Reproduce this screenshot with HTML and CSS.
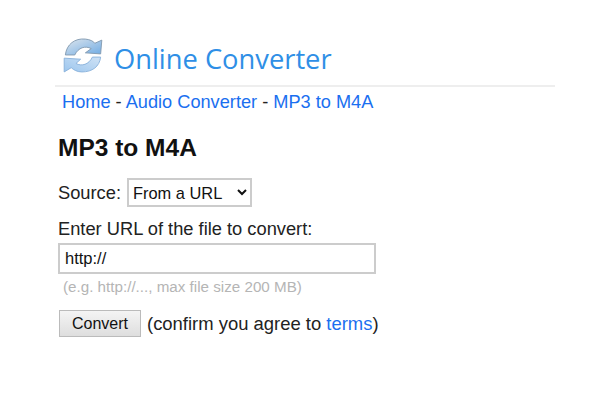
FILE: index.html
```html
<!DOCTYPE html>
<html lang="en">
<head>
  <meta charset="UTF-8">
  <title>MP3 to M4A - Online Converter</title>
  <link rel="stylesheet" href="styles.css">
</head>
<body>
  <div class="page">
    <div class="header">
      <svg class="logo" width="40" height="35" viewBox="2 1 34 33" preserveAspectRatio="none">
        <defs>
          <linearGradient id="arrowTop" x1="0" y1="0" x2="1" y2="1">
            <stop offset="0" stop-color="#dde5ec"/>
            <stop offset="1" stop-color="#6fabe4"/>
          </linearGradient>
          <linearGradient id="arrowBottom" x1="0" y1="1" x2="1" y2="0">
            <stop offset="0" stop-color="#9cc6ee"/>
            <stop offset="1" stop-color="#cfe2f5"/>
          </linearGradient>
        </defs>
        <path d="M4 17 C5 7 12 1 21 2 C25 2.500 28 4 29 6 L35 3 L34 16 L21 15 L26 11 C21 8 15 10 12 17 Z" fill="url(#arrowTop)" stroke="#8198ae" stroke-width="0.8"/>
        <path d="M34 19 C33 28 27 33 18 33 C14 33 11 31 9 29 L3 33 L3 20 L17 21 L13 25 C18 28 24 26 27 19 Z" fill="url(#arrowBottom)" stroke="#86b0da" stroke-width="0.8"/>
      </svg>
      <span class="site-name">Online Converter</span>
    </div>
    <div class="crumbs">
      <a href="#">Home</a> - <a href="#">Audio Converter</a> - <a href="#">MP3 to M4A</a>
    </div>
    <h1>MP3 to M4A</h1>
    <div class="source-row">
      <label>Source:</label>
      <select class="source-select">
        <option>From a URL</option>
      </select>
    </div>
    <div class="url-label">Enter URL of the file to convert:</div>
    <input class="url-input" type="text" value="http://">
    <div class="hint">(e.g. http://..., max file size 200 MB)</div>
    <div class="submit-row">
      <button class="convert-btn">Convert</button>
      <span class="agree">(confirm you agree to <a href="#">terms</a>)</span>
    </div>
  </div>
</body>
</html>
```

FILE: styles.css
```css
html, body {
  margin: 0;
  padding: 0;
  background-color: #fff;
}

body {
  font-family: 'Liberation Sans', Arial, sans-serif;
  font-size: 18.3px;
  color: #222;
}

a {
  color: #1a6ff0;
  text-decoration: none;
}

.page {
  width: 500px;
  margin-left: 55px;
  padding-top: 37px;
}

.header {
  display: flex;
  align-items: center;
  height: 42px;
  padding-left: 8px;
  padding-bottom: 6px;
  border-bottom: 2px solid #eee;
}

.logo {
  margin-right: 11px;
  margin-bottom: 6px;
}

.site-name {
  font-family: 'Open Sans', sans-serif;
  font-size: 27.3px;
  color: #2f8fe6;
}

.crumbs {
  margin-top: 6px;
  padding-left: 7px;
  font-size: 18.2px;
  line-height: 18px;
}

h1 {
  margin: 23px 0 0 3px;
  font-size: 24.5px;
  line-height: 28px;
  color: #111;
}

.source-row {
  display: flex;
  align-items: center;
  margin: 16px 0 0 3px;
  gap: 6px;
}

.source-select {
  width: 125px;
  height: 29px;
  font-family: inherit;
  font-size: 16.4px;
  color: #111;
  background-color: #fff;
  border: 2px solid #ccc;
}

.url-label {
  margin: 13px 0 0 3px;
  line-height: 18px;
}

.url-input {
  display: block;
  box-sizing: border-box;
  width: 318px;
  height: 31px;
  margin: 5px 0 0 3px;
  padding: 0 5px;
  font-family: inherit;
  font-size: 16.5px;
  color: #111;
  border: 2px solid #ccc;
  outline: none;
}

.hint {
  margin: 5px 0 0 3px;
  padding-left: 5px;
  font-size: 15.2px;
  line-height: 16px;
  color: #b5b5b5;
}

.submit-row {
  display: flex;
  align-items: center;
  gap: 6px;
  margin: 15px 0 0 4px;
}

.agree {
  font-size: 18.45px;
}

.convert-btn {
  width: 82px;
  height: 27px;
  padding: 0;
  font-family: inherit;
  font-size: 16px;
  color: #111;
  background: linear-gradient(#f4f4f4, #dedede);
  border: 1px solid #bbb;
}
```
